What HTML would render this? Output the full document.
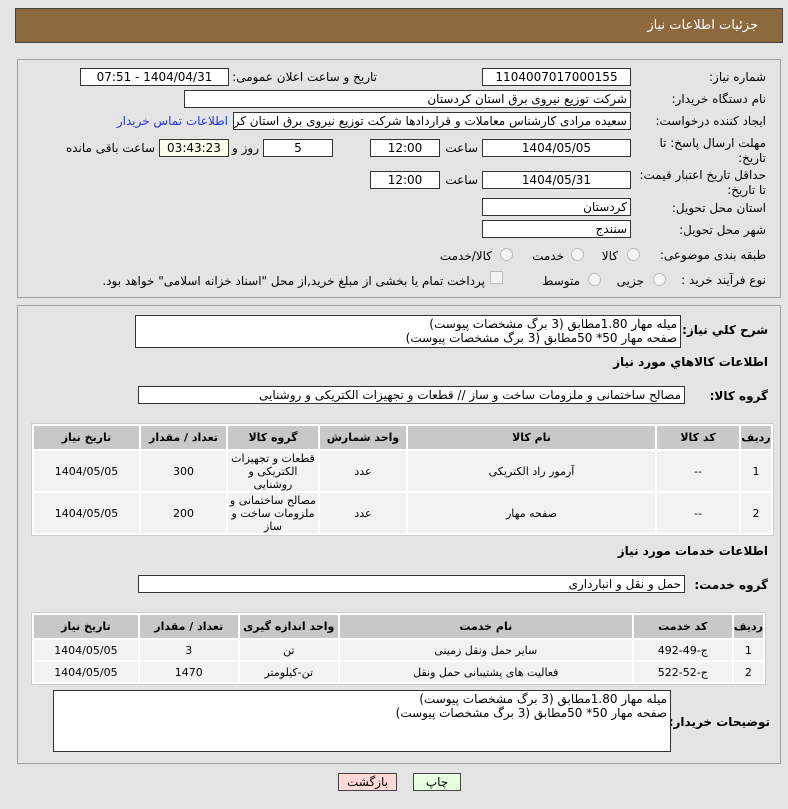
<!DOCTYPE html>
<html><head><meta charset="utf-8">
<style>
body{margin:0;width:788px;height:809px;background:#e4e4e4;font-family:"DejaVu Sans","Liberation Sans",sans-serif;font-size:12px;color:#000;position:relative;overflow:hidden}
.a{position:absolute;white-space:nowrap}
.in{position:absolute;background:#fff;border:1px solid #333;box-sizing:border-box;height:18px;line-height:16px;padding:0 3px;direction:rtl;overflow:hidden;white-space:nowrap}
.c{text-align:center}
.l{direction:rtl;text-align:right}
.b{font-weight:bold}
.panel{position:absolute;border:1px solid #a0a0a0;box-sizing:border-box}
.rad{position:absolute;width:11px;height:11px;border-radius:50%;border:1px solid #bbb;background:#f4f4f4}
table{position:absolute;border-collapse:separate;border-spacing:2px;background:#fff;border:1px solid #ccc;direction:rtl;font-size:11px}
th{background:#c8c8c8;font-weight:bold;height:23px;padding:0}
td{background:#f2f2f2;text-align:center;padding:0;line-height:13px}
</style></head><body>
<div class="a" style="left:15px;top:8px;width:768px;height:35px;background:#8c6a3e;border:1px solid #444;box-sizing:border-box"></div>
<div class="a l" style="right:30px;top:18px;color:#fff;font-size:13px">جزئیات اطلاعات نیاز</div>

<div class="panel" style="left:17px;top:59px;width:764px;height:239px"></div>
<div class="a l" style="right:22px;top:70px">شماره نیاز:</div>
<div class="in c" style="left:482px;top:68px;width:149px">1104007017000155</div>
<div class="a l" style="right:411px;top:70px">تاریخ و ساعت اعلان عمومی:</div>
<div class="in c" style="left:80px;top:68px;width:149px">1404/04/31 - 07:51</div>

<div class="a l" style="right:22px;top:92px">نام دستگاه خریدار:</div>
<div class="in" style="left:184px;top:90px;width:447px">شرکت توزیع نیروی برق استان کردستان</div>

<div class="a l" style="right:22px;top:114px">ایجاد کننده درخواست:</div>
<div class="in" style="left:233px;top:112px;width:398px">سعیده مرادی کارشناس معاملات و قراردادها شرکت توزیع نیروی برق استان کردستان</div>
<div class="a l" style="right:560px;top:114px;color:#2233dd">اطلاعات تماس خریدار</div>

<div class="a l" style="right:22px;top:136px;line-height:15px">مهلت ارسال پاسخ: تا<br>تاریخ:</div>
<div class="in c" style="left:482px;top:139px;width:149px">1404/05/05</div>
<div class="a l" style="right:310px;top:141px">ساعت</div>
<div class="in c" style="left:370px;top:139px;width:70px">12:00</div>
<div class="in c" style="left:263px;top:139px;width:70px">5</div>
<div class="a l" style="right:529px;top:141px">روز و</div>
<div class="in c" style="left:159px;top:139px;width:70px;background:#ffffee">03:43:23</div>
<div class="a l" style="right:633px;top:141px">ساعت باقی مانده</div>

<div class="a l" style="right:22px;top:168px;line-height:15px">حداقل تاریخ اعتبار قیمت:<br>تا تاریخ:</div>
<div class="in c" style="left:482px;top:171px;width:149px">1404/05/31</div>
<div class="a l" style="right:310px;top:173px">ساعت</div>
<div class="in c" style="left:370px;top:171px;width:70px">12:00</div>

<div class="a l" style="right:22px;top:201px">استان محل تحویل:</div>
<div class="in" style="left:482px;top:198px;width:149px">کردستان</div>
<div class="a l" style="right:22px;top:223px">شهر محل تحویل:</div>
<div class="in" style="left:482px;top:220px;width:149px">سنندج</div>

<div class="a l" style="right:22px;top:248px">طبقه بندی موضوعی:</div>
<div class="rad" style="left:627px;top:248px"></div><div class="a l" style="right:170px;top:249px">کالا</div>
<div class="rad" style="left:571px;top:248px"></div><div class="a l" style="right:224px;top:249px">خدمت</div>
<div class="rad" style="left:500px;top:248px"></div><div class="a l" style="right:296px;top:249px">کالا/خدمت</div>

<div class="a l" style="right:22px;top:273px">نوع فرآیند خرید :</div>
<div class="rad" style="left:653px;top:273px"></div><div class="a l" style="right:144px;top:274px">جزیی</div>
<div class="rad" style="left:588px;top:273px"></div><div class="a l" style="right:208px;top:274px">متوسط</div>
<div class="a" style="left:490px;top:271px;width:11px;height:11px;border:1px solid #bbb;background:#f4f4f4"></div>
<div class="a l" style="right:303px;top:274px">پرداخت تمام یا بخشی از مبلغ خرید,از محل "اسناد خزانه اسلامی" خواهد بود.</div>

<div class="panel" style="left:17px;top:305px;width:764px;height:459px"></div>
<div class="a l b" style="right:20px;top:323px">شرح کلي نیاز:</div>
<div class="in" style="left:135px;top:315px;width:546px;height:33px;line-height:14px;padding-top:1px;white-space:normal">میله مهار 1.80مطابق (3 برگ مشخصات پیوست)<br>صفحه مهار 50* 50مطابق (3 برگ مشخصات پیوست)</div>
<div class="a l b" style="right:20px;top:355px">اطلاعات کالاهاي مورد نیاز</div>
<div class="a l b" style="right:20px;top:389px">گروه کالا:</div>
<div class="in" style="left:138px;top:386px;width:547px">مصالح ساختمانی و ملزومات ساخت و ساز // قطعات و تجهیزات الکتریکی و روشنایی</div>

<table style="left:31px;top:423px;width:743px">
<tr><th style="width:30px">ردیف</th><th style="width:82px">کد کالا</th><th style="width:247px">نام کالا</th><th style="width:86px">واحد شمارش</th><th style="width:90px">گروه کالا</th><th style="width:85px">تعداد / مقدار</th><th>تاریخ نیاز</th></tr>
<tr style="height:40px"><td>1</td><td>--</td><td>آرمور راد الکتریکی</td><td>عدد</td><td>قطعات و تجهیزات الکتریکی و روشنایی</td><td>300</td><td>1404/05/05</td></tr>
<tr style="height:40px"><td>2</td><td>--</td><td>صفحه مهار</td><td>عدد</td><td>مصالح ساختمانی و ملزومات ساخت و ساز</td><td>200</td><td>1404/05/05</td></tr>
</table>

<div class="a l b" style="right:20px;top:544px">اطلاعات خدمات مورد نیاز</div>
<div class="a l b" style="right:20px;top:578px">گروه خدمت:</div>
<div class="in" style="left:138px;top:575px;width:547px">حمل و نقل و انبارداری</div>

<table style="left:31px;top:612px;width:735px">
<tr><th style="width:24px;height:21px">ردیف</th><th style="width:98px">کد خدمت</th><th style="width:292px">نام خدمت</th><th style="width:98px">واحد اندازه گیری</th><th style="width:98px">تعداد / مقدار</th><th>تاریخ نیاز</th></tr>
<tr style="height:20px"><td>1</td><td>ج-49-492</td><td>سایر حمل ونقل زمینی</td><td>تن</td><td>3</td><td>1404/05/05</td></tr>
<tr style="height:20px"><td>2</td><td>ج-52-522</td><td>فعالیت های پشتیبانی حمل ونقل</td><td>تن-کیلومتر</td><td>1470</td><td>1404/05/05</td></tr>
</table>

<div class="a l b" style="right:18px;top:715px">توضیحات خریدار:</div>
<div class="in" style="left:53px;top:690px;width:618px;height:62px;line-height:14px;padding-top:1px;white-space:normal">میله مهار 1.80مطابق (3 برگ مشخصات پیوست)<br>صفحه مهار 50* 50مطابق (3 برگ مشخصات پیوست)</div>

<div class="a c" style="left:338px;top:773px;width:59px;height:18px;line-height:16px;border:1px solid #444;box-sizing:border-box;background:#ffd8d8">بازگشت</div>
<div class="a c" style="left:413px;top:773px;width:48px;height:18px;line-height:16px;border:1px solid #444;box-sizing:border-box;background:#e6ffdf">چاپ</div>
</body></html>
